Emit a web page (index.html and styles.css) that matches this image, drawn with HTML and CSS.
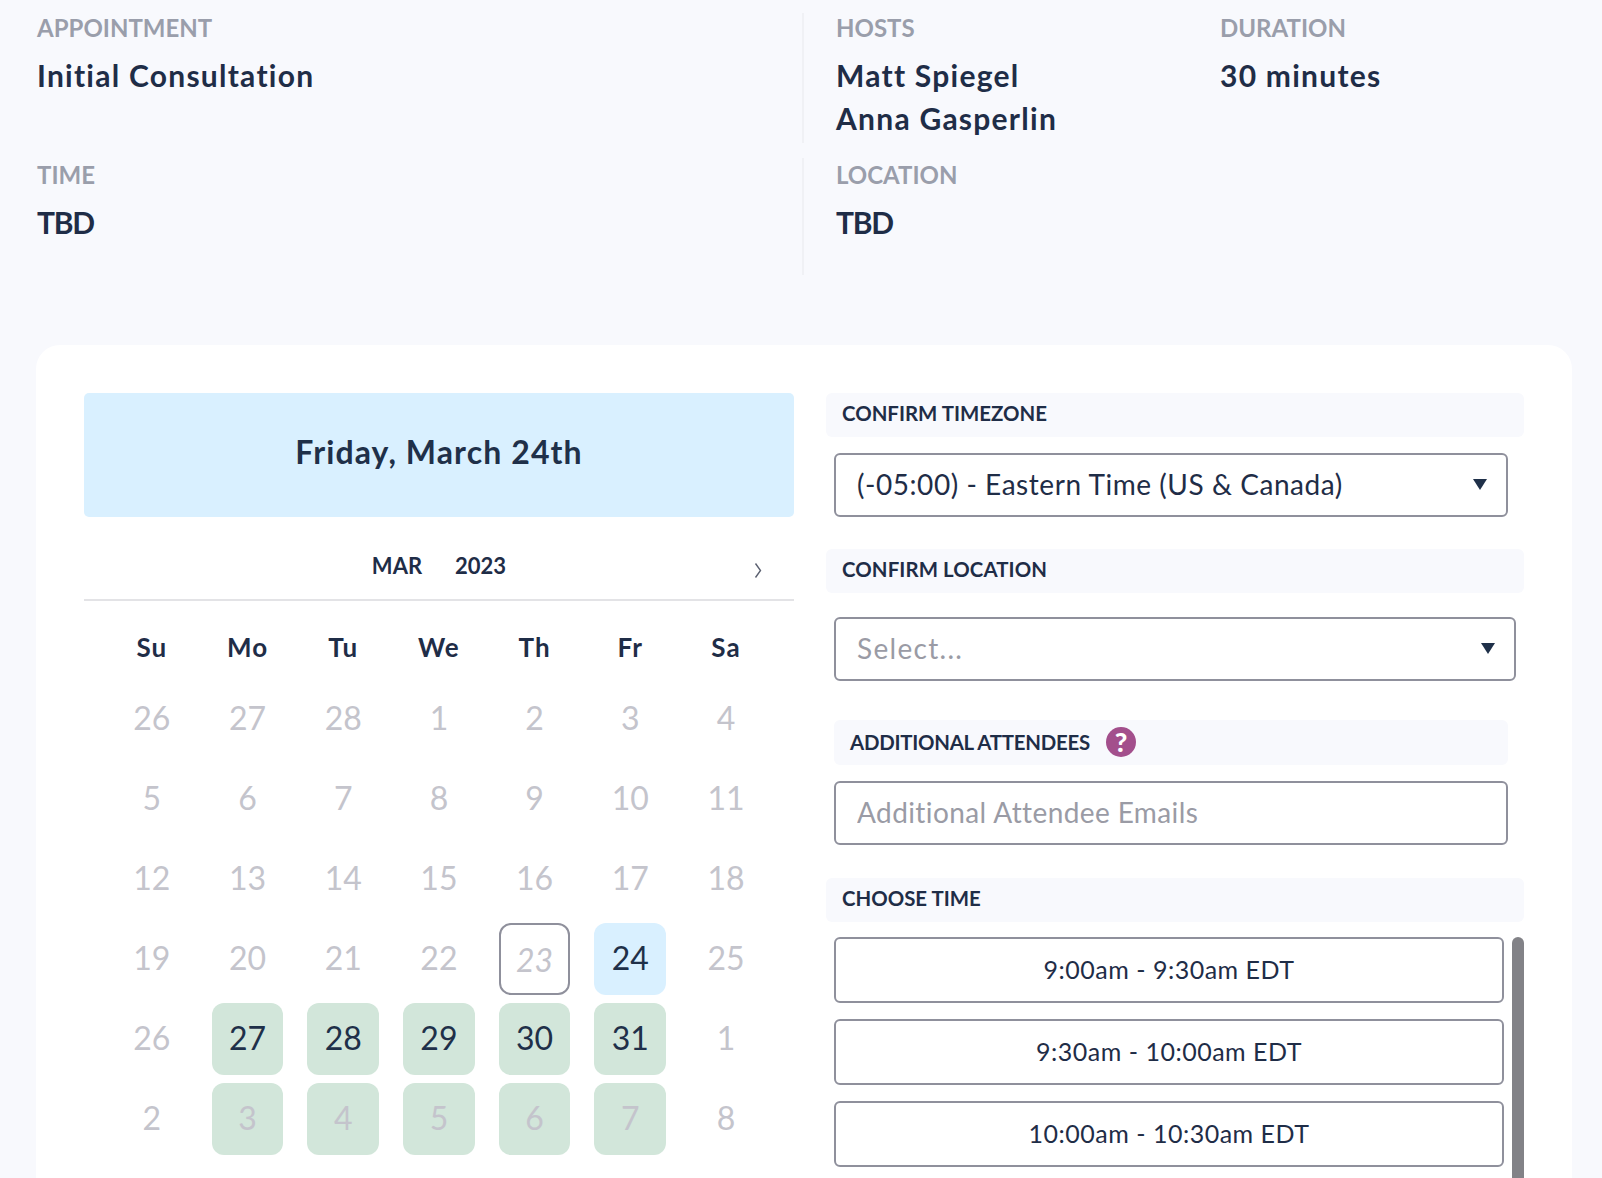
FILE: index.html
```html
<!DOCTYPE html>
<html lang="en">
<head>
  <meta charset="UTF-8">
  <title>Initial Consultation</title>
  <link rel="stylesheet" href="styles.css">
</head>
<body>

<div class="info">
  <div class="info-row">
    <div class="info-cell">
      <div class="info-label">APPOINTMENT</div>
      <div class="info-value">Initial Consultation</div>
    </div>
    <div class="info-cell info-split">
      <div class="info-hosts">
        <div class="info-label">HOSTS</div>
        <div class="info-value">Matt Spiegel<br>Anna Gasperlin</div>
      </div>
      <div>
        <div class="info-label">DURATION</div>
        <div class="info-value">30 minutes</div>
      </div>
    </div>
  </div>
  <div class="info-row info-row-second">
    <div class="info-cell">
      <div class="info-label">TIME</div>
      <div class="info-value info-caps">TBD</div>
    </div>
    <div class="info-cell info-split">
      <div>
        <div class="info-label">LOCATION</div>
        <div class="info-value info-caps">TBD</div>
      </div>
    </div>
  </div>
</div>

<div class="card">
  <div class="left">
    <div class="banner">Friday, March 24th</div>
    <div class="month-nav">
      <span></span>
      <div class="month-name"><span>MAR</span><span>2023</span></div>
      <svg class="chevron" width="8" height="15" viewBox="0 0 8 15"><path d="M1.5 0.5 L6.5 7.5 L1.5 14.5" fill="none" stroke="#5b6070" stroke-width="1.4"/></svg>
    </div>
    <div class="calendar">
      <div class="weekday">Su</div><div class="weekday">Mo</div><div class="weekday">Tu</div><div class="weekday">We</div><div class="weekday">Th</div><div class="weekday">Fr</div><div class="weekday">Sa</div>

      <div class="day">26</div><div class="day">27</div><div class="day">28</div><div class="day">1</div><div class="day">2</div><div class="day">3</div><div class="day">4</div>
      <div class="day">5</div><div class="day">6</div><div class="day">7</div><div class="day">8</div><div class="day">9</div><div class="day">10</div><div class="day">11</div>
      <div class="day">12</div><div class="day">13</div><div class="day">14</div><div class="day">15</div><div class="day">16</div><div class="day">17</div><div class="day">18</div>
      <div class="day">19</div><div class="day">20</div><div class="day">21</div><div class="day">22</div><div class="day today">23</div><div class="day selected">24</div><div class="day">25</div>
      <div class="day">26</div><div class="day open">27</div><div class="day open">28</div><div class="day open">29</div><div class="day open">30</div><div class="day open">31</div><div class="day">1</div>
      <div class="day">2</div><div class="day open-next">3</div><div class="day open-next">4</div><div class="day open-next">5</div><div class="day open-next">6</div><div class="day open-next">7</div><div class="day">8</div>
    </div>
  </div>

  <div class="right">
    <div class="section-title">CONFIRM TIMEZONE</div>
    <div class="field select-field">
      <span>(-05:00) - Eastern Time (US &amp; Canada)</span>
      <svg width="14" height="11" viewBox="0 0 14 11"><path d="M0 0 H14 L7 11 Z" fill="#1f3049"/></svg>
    </div>

    <div class="section-title section-location">CONFIRM LOCATION</div>
    <div class="field select-field field-wide">
      <span class="placeholder">Select...</span>
      <svg width="14" height="11" viewBox="0 0 14 11"><path d="M0 0 H14 L7 11 Z" fill="#1f3049"/></svg>
    </div>

    <div class="section-title section-attendees">
      <span>ADDITIONAL ATTENDEES</span>
      <span class="help">?</span>
    </div>
    <input class="field attendee-input" type="text" placeholder="Additional Attendee Emails">

    <div class="section-title section-time">CHOOSE TIME</div>
    <div class="times">
      <div class="time-list">
        <button class="slot">9:00am - 9:30am EDT</button>
        <button class="slot">9:30am - 10:00am EDT</button>
        <button class="slot">10:00am - 10:30am EDT</button>
      </div>
      <div class="scrollbar"></div>
    </div>
  </div>
</div>

</body>
</html>
```

FILE: styles.css
```css
html, body {
  height: 100%;
  margin: 0;
  overflow: hidden;
}
body {
  background: #f8f9fd;
  color: #1f2d47;
  font-family: Lato, "Open Sans", sans-serif;
}

/* top summary */
.info {
  padding: 13px 0 0 37px;
}
.info-row {
  display: grid;
  grid-template-columns: 765px 1fr;
  height: 130px;
}
.info-row-second {
  margin-top: 15px;
  height: 115px;
  padding-top: 2px;
}
.info-row-second .info-split {
  margin-top: -2px;
  padding-top: 2px;
}
.info-split {
  display: flex;
  border-left: 2px solid #f0f1f5;
  padding-left: 32px;
}
.info-hosts {
  width: 384px;
}
.info-label {
  font-size: 24px;
  line-height: 30px;
  font-weight: 700;
  color: #9a9eab;
}
.info-value {
  margin-top: 11px;
  font-size: 30px;
  line-height: 43px;
  font-weight: 700;
  letter-spacing: 1.25px;
}
.info-caps {
  letter-spacing: -1.3px;
}

/* white card */
.card {
  display: grid;
  grid-template-columns: 710px 698px;
  gap: 32px;
  margin: 70px 30px 0 36px;
  padding: 48px 48px 0;
  height: 833px;
  box-sizing: border-box;
  overflow: hidden;
  background: #fff;
  border-radius: 24px 24px 0 0;
}
.banner {
  height: 124px;
  display: flex;
  align-items: center;
  justify-content: center;
  padding-bottom: 8px;
  box-sizing: border-box;
  background: #d9f0ff;
  border-radius: 5px;
  font-size: 32px;
  font-weight: 700;
  letter-spacing: 1.1px;
  color: #1f3049;
}
.month-nav {
  display: grid;
  grid-template-columns: 1fr auto 1fr;
  align-items: center;
  padding: 32px 32px 16px;
  border-bottom: 2px solid #e3e3e6;
}
.month-name {
  display: flex;
  gap: 33px;
  font-size: 22px;
  line-height: 34px;
  font-weight: 700;
}
.chevron {
  justify-self: end;
  margin-top: 8px;
}
.calendar {
  display: grid;
  grid-template-columns: repeat(7, 71.7px);
  grid-template-rows: 52px repeat(6, 72px);
  gap: 8px 24px;
  padding: 22px 31px 0 32px;
}
.weekday {
  display: flex;
  align-items: center;
  justify-content: center;
  padding-bottom: 4px;
  box-sizing: border-box;
  font-size: 26px;
  font-weight: 700;
  letter-spacing: 1px;
}
.day {
  display: flex;
  align-items: center;
  justify-content: center;
  padding-bottom: 3px;
  box-sizing: border-box;
  border-radius: 12px;
  font-size: 32px;
  color: #c4c4cc;
}
.today {
  border: 2px solid #8f909c;
  padding-bottom: 0;
  font-style: italic;
}
.selected {
  background: #d9f0ff;
  color: #1f3049;
}
.open {
  background: #d2e6da;
  color: #1f3049;
}
.open-next {
  background: #d2e6da;
}

/* right column */
.section-title {
  height: 44px;
  display: flex;
  align-items: center;
  padding: 0 16px 4px;
  box-sizing: border-box;
  background: #f8f9fd;
  border-radius: 6px;
  font-size: 20.4px;
  font-weight: 700;
}
.section-location {
  margin-top: 32px;
  letter-spacing: 0.1px;
}
.section-attendees {
  width: 674px;
  height: 45px;
  margin: 39px 0 0 8px;
  padding-bottom: 2px;
  gap: 16px;
  letter-spacing: -0.25px;
}
.section-time {
  margin-top: 33px;
}
.help {
  display: flex;
  align-items: center;
  justify-content: center;
  width: 30px;
  height: 30px;
  border-radius: 50%;
  background: #a34f8c;
  color: #fff;
  font-size: 27px;
  font-weight: 900;
}
.field {
  display: flex;
  align-items: center;
  width: 674px;
  height: 64px;
  margin: 16px 0 0 8px;
  padding: 0 19px 2px 21px;
  box-sizing: border-box;
  border: 2px solid #8f909c;
  border-radius: 6px;
  background: #fff;
  color: #1f2d47;
  font-family: inherit;
  font-size: 28px;
  letter-spacing: 0.55px;
}
.select-field {
  justify-content: space-between;
}
.field-wide {
  width: 682px;
  margin-top: 24px;
}
.placeholder {
  color: #9a9ba5;
  letter-spacing: 1.3px;
}
.attendee-input {
  margin-top: 16px;
  outline: none;
  letter-spacing: 0.4px;
}
.attendee-input::placeholder {
  color: #9a9ba5;
  opacity: 1;
}
.times {
  display: flex;
  margin: 15px 0 0 8px;
  gap: 8px;
}
.time-list {
  display: flex;
  flex-direction: column;
  gap: 16px;
}
.slot {
  width: 670px;
  height: 66px;
  padding: 0 0 2px;
  box-sizing: border-box;
  border: 2px solid #8f909c;
  border-radius: 6px;
  background: #fff;
  color: #1f2d47;
  font-family: inherit;
  font-size: 25px;
  letter-spacing: 0.5px;
}
.scrollbar {
  width: 12px;
  height: 241px;
  border-radius: 6px 6px 0 0;
  background: #828287;
}
```
